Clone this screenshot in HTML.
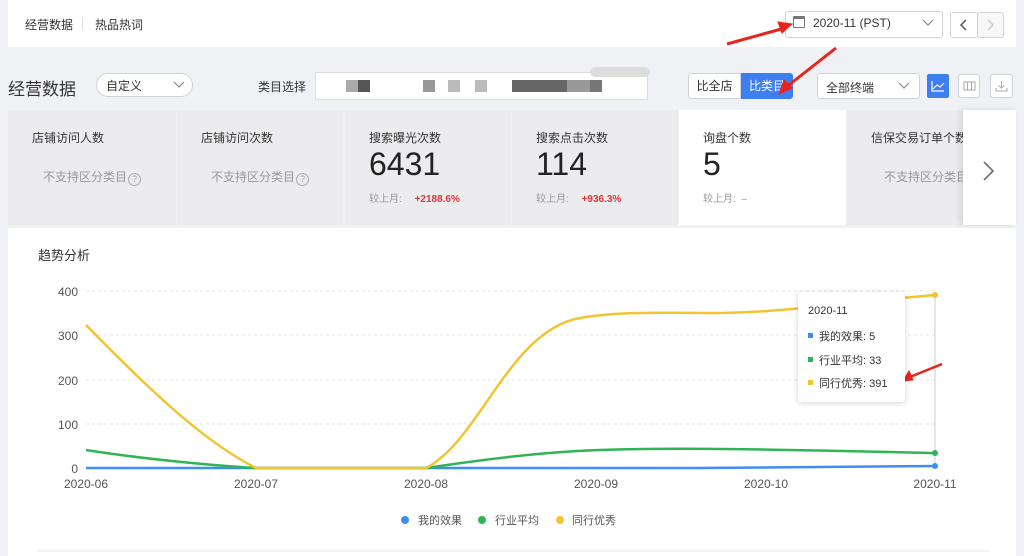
<!DOCTYPE html>
<html><head><meta charset="utf-8"><style>
*{margin:0;padding:0;box-sizing:border-box}
body{width:1024px;height:556px;overflow:hidden;background:#f0f1f4;font-family:"Liberation Sans","Noto Sans CJK SC",sans-serif;color:#333;position:relative}
.abs{position:absolute}
.top{left:8px;top:0;width:1008px;height:47px;background:#fff}
.card{top:110px;height:115px;background:#ececee}
.card .t{position:absolute;left:24px;top:19px;font-size:12px;color:#333}
.card .ns{position:absolute;top:58px;font-size:12px;color:#999;width:100%;text-align:center}
.card .n{position:absolute;left:24px;top:36px;font-size:32px;color:#222}
.card .c{position:absolute;left:24px;top:80px;font-size:10px;color:#999}
.card .c b{color:#d9363e;font-weight:bold;margin-left:10px}
.q{display:inline-block;width:13px;height:13px;border:1px solid #aaa;border-radius:50%;font-size:9px;line-height:11px;text-align:center;color:#aaa;vertical-align:-1px;margin-left:1px}
.sel{background:#fff;border:1px solid #d0d3d8;border-radius:3px;font-size:12px}
</style></head><body>
<div class="abs top"></div>
<div class="abs" style="left:25px;top:16px;font-size:12px;color:#333">经营数据</div>
<div class="abs" style="left:82px;top:17px;width:1px;height:13px;background:#ddd"></div>
<div class="abs" style="left:95px;top:16px;font-size:12px;color:#333">热品热词</div>
<div class="abs sel" style="left:785px;top:11px;width:158px;height:27px"></div>
<div class="abs" style="left:793px;top:16px;width:12px;height:12px;border:1px solid #777;border-top-width:3px;border-radius:1px"></div>
<div class="abs" style="left:813px;top:16px;font-size:12px;color:#333">2020-11 (PST)</div>
<svg class="abs" style="left:922px;top:18px" width="12" height="10"><path d="M1 2L6 7L11 2" stroke="#888" fill="none" stroke-width="1.2"/></svg>
<div class="abs sel" style="left:950px;top:12px;width:28px;height:26px"></div>
<svg class="abs" style="left:950px;top:12px" width="28" height="26"><path d="M16 8L11 13L16 18" stroke="#555" fill="none" stroke-width="1.5"/></svg>
<div class="abs sel" style="left:977px;top:12px;width:27px;height:26px;background:#f7f7f7"></div>
<svg class="abs" style="left:977px;top:12px" width="27" height="26"><path d="M11 8L16 13L11 18" stroke="#ccc" fill="none" stroke-width="1.5"/></svg>

<div class="abs" style="left:8px;top:75px;font-size:17px;color:#333">经营数据</div>
<div class="abs sel" style="left:96px;top:73px;width:97px;height:24px;border-radius:12px"></div>
<div class="abs" style="left:106px;top:77px;font-size:12px">自定义</div>
<svg class="abs" style="left:173px;top:80px" width="12" height="10"><path d="M1 2L6 7L11 2" stroke="#888" fill="none" stroke-width="1.2"/></svg>
<div class="abs" style="left:258px;top:78px;font-size:12px">类目选择</div>
<div class="abs" style="left:315px;top:72px;width:333px;height:28px;background:#fff;border:1px solid #ddd;border-radius:2px"></div>
<div class="abs" style="left:346px;top:80px;width:12px;height:12px;background:#aaa"></div>
<div class="abs" style="left:358px;top:80px;width:12px;height:12px;background:#555"></div>
<div class="abs" style="left:423px;top:80px;width:12px;height:12px;background:#999"></div>
<div class="abs" style="left:448px;top:80px;width:12px;height:12px;background:#bbb"></div>
<div class="abs" style="left:475px;top:80px;width:12px;height:12px;background:#bbb"></div>
<div class="abs" style="left:512px;top:80px;width:55px;height:12px;background:#666"></div>
<div class="abs" style="left:567px;top:80px;width:30px;height:12px;background:#999"></div>
<div class="abs" style="left:590px;top:80px;width:12px;height:12px;background:#777"></div>
<div class="abs" style="left:590px;top:67px;width:60px;height:10px;background:#ddd;border-radius:8px"></div>

<div class="abs sel" style="left:688px;top:73px;width:53px;height:26px;text-align:center;line-height:24px;border-radius:3px 0 0 3px">比全店</div>
<div class="abs" style="left:741px;top:73px;width:52px;height:26px;background:#3d7ff0;color:#fff;font-size:12px;text-align:center;line-height:26px;border-radius:0 3px 3px 0">比类目</div>
<div class="abs sel" style="left:817px;top:73px;width:103px;height:26px"></div>
<div class="abs" style="left:826px;top:79px;font-size:12px">全部终端</div>
<svg class="abs" style="left:898px;top:81px" width="12" height="10"><path d="M1 2L6 7L11 2" stroke="#888" fill="none" stroke-width="1.2"/></svg>
<div class="abs" style="left:927px;top:74px;width:22px;height:24px;background:#3d7ff0;border-radius:2px"></div>
<svg class="abs" style="left:927px;top:74px" width="22" height="24"><path d="M5 7V17H17M6 15L10 11L13 13L17 9" stroke="#fff" fill="none" stroke-width="1.2"/></svg>
<div class="abs sel" style="left:958px;top:74px;width:22px;height:24px"></div>
<svg class="abs" style="left:958px;top:74px" width="22" height="24"><rect x="6" y="8" width="11" height="8" fill="none" stroke="#aaa"/><path d="M9.5 8V16M13.5 8V16" stroke="#aaa"/></svg>
<div class="abs sel" style="left:990px;top:74px;width:23px;height:24px"></div>
<svg class="abs" style="left:990px;top:74px" width="23" height="24"><path d="M11.5 7V14M8.5 11.5L11.5 14L14.5 11.5M6 14V17H17V14" stroke="#aaa" fill="none"/></svg>

<div class="abs card" style="left:8px;width:168px"><div class="t">店铺访问人数</div><div class="ns">不支持区分类目<span class="q">?</span></div></div>
<div class="abs card" style="left:177px;width:166px"><div class="t">店铺访问次数</div><div class="ns">不支持区分类目<span class="q">?</span></div></div>
<div class="abs card" style="left:345px;width:166px"><div class="t">搜索曝光次数</div><div class="n">6431</div><div class="c">较上月: <b>+2188.6%</b></div></div>
<div class="abs card" style="left:512px;width:166px"><div class="t">搜索点击次数</div><div class="n">114</div><div class="c">较上月: <b>+936.3%</b></div></div>
<div class="abs card" style="left:679px;width:167px;background:#fff"><div class="t">询盘个数</div><div class="n">5</div><div class="c">较上月: &nbsp;–</div></div>
<div class="abs card" style="left:847px;width:120px;overflow:hidden"><div class="t" style="white-space:nowrap">信保交易订单个数</div><div class="ns" style="left:37px;text-align:left;white-space:nowrap">不支持区分类目</div></div>
<div class="abs" style="left:963px;top:110px;width:53px;height:115px;background:#fff;box-shadow:-3px 0 6px rgba(0,0,0,.1)"></div>
<svg class="abs" style="left:963px;top:110px" width="53" height="115"><path d="M21 52L30 61L21 70" stroke="#777" fill="none" stroke-width="1.8"/></svg>

<div class="abs" style="left:8px;top:228px;width:1008px;height:328px;background:#fff"></div>
<div class="abs" style="left:38px;top:245px;font-size:13px;color:#333">趋势分析</div>
<svg class="abs" style="left:0;top:0" width="1024" height="556" font-family="Liberation Sans, sans-serif">
<g stroke="#e6e6e6" stroke-dasharray="3,3"><path d="M86 291H935M86 335H935M86 380H935M86 424H935"/></g>
<g font-size="12" fill="#555" text-anchor="end"><text x="78" y="296">400</text><text x="78" y="340">300</text><text x="78" y="385">200</text><text x="78" y="429">100</text><text x="78" y="473">0</text></g>
<g font-size="12" fill="#555" text-anchor="middle"><text x="86" y="488">2020-06</text><text x="256" y="488">2020-07</text><text x="426" y="488">2020-08</text><text x="596" y="488">2020-09</text><text x="766" y="488">2020-10</text><text x="935" y="488">2020-11</text></g>
<path d="M935 296V468" stroke="#ccc"/>
<path d="M86 468H700C800 467 880 467 935 466" stroke="#3d8ef0" stroke-width="2.5" fill="none"/>
<path d="M86 450C150 460 220 466 256 468H426C480 460 540 452 600 450C680 447 800 450 935 453" stroke="#30b455" stroke-width="2.5" fill="none"/>
<path d="M86 325C140 380 200 440 256 468H426C480 440 510 330 580 318C620 311 670 313 720 313C790 312 850 302 935 295" stroke="#f3c431" stroke-width="2.5" fill="none"/>
<circle cx="935" cy="295" r="3" fill="#f3c431"/><circle cx="935" cy="453" r="3" fill="#30b455"/><circle cx="935" cy="466" r="3" fill="#3d8ef0"/>
<g font-size="11" fill="#555"><circle cx="405" cy="520" r="4" fill="#3d8ef0"/><text x="418" y="524">我的效果</text><circle cx="482" cy="520" r="4" fill="#30b455"/><text x="495" y="524">行业平均</text><circle cx="560" cy="520" r="4" fill="#f3c431"/><text x="572" y="524">同行优秀</text></g>
<path d="M38 551H990" stroke="#e8e8e8"/>
<g fill="#e8251d" stroke="#e8251d">
<path d="M727 44L785 28" stroke-width="3"/><path d="M792 24L778 22L782 33Z"/>
<path d="M836 48L785 88" stroke-width="3"/><path d="M779 94L784 80L792 88Z"/>
<path d="M942 364L910 377" stroke-width="2.5"/><path d="M903 381L909 371L913 380Z"/>
</g>
</svg>
<div class="abs" style="left:798px;top:292px;width:107px;height:110px;background:#fff;box-shadow:0 1px 6px rgba(0,0,0,.18);border-radius:3px;font-size:11px;color:#333">
<div style="position:absolute;left:10px;top:13px">2020-11</div>
<div style="position:absolute;left:10px;top:36px"><span style="display:inline-block;width:5px;height:5px;background:#3d8ef0;margin-right:6px;vertical-align:2px"></span>我的效果: 5</div>
<div style="position:absolute;left:10px;top:60px"><span style="display:inline-block;width:5px;height:5px;background:#30b455;margin-right:6px;vertical-align:2px"></span>行业平均: 33</div>
<div style="position:absolute;left:10px;top:83px"><span style="display:inline-block;width:5px;height:5px;background:#f3c431;margin-right:6px;vertical-align:2px"></span>同行优秀: 391</div>
</div>
</body></html>
